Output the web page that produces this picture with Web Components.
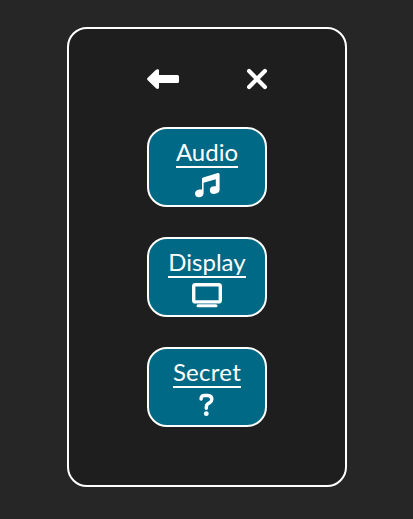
<!DOCTYPE html>
<html lang="en">
<head>
<meta charset="utf-8">
<title>Menu</title>
<style>
body{margin:0;background:#262626;color:#fff;font-family:Lato,sans-serif}
.wide{letter-spacing:.28px}
</style>
</head>
<body>
<menu-page>
  <menu-panel>
    <tool-row slot="tools"><menu-icon name="back"></menu-icon><menu-icon name="close"></menu-icon></tool-row>
    <menu-button icon="music">Audio</menu-button>
    <menu-button icon="screen">Display</menu-button>
    <menu-button icon="question" class="wide">Secret</menu-button>
  </menu-panel>
</menu-page>
<script>
const icons = {
  back: [32, 20, '<path fill="currentColor" d="M.5 8.9 9 .8Q10-.1 11.2.2 12 .6 12 1.8V6H30.5Q32 6 32 7.5V12.5Q32 14 30.5 14H12V18.2Q12 19.4 11.2 19.8 10 20.1 9 19.2L.5 11.1Q-.5 10 .5 8.9Z"/>'],
  close: [20, 20, '<path stroke="currentColor" stroke-width="4.2" stroke-linecap="round" d="M2.1 2.1 17.9 17.9M17.9 2.1 2.1 17.9"/>'],
  music: [25, 25, '<path fill="currentColor" d="M22.8.1 8.2 4.4Q7 4.8 7 6V16.6Q1 15.5 0 20 0 24.3 4 24.3 8.5 24 8.6 20V9.7L20.8 6.2V13.3Q15 12.5 14.8 17 15 21.1 18.8 21.1 24.4 20.5 24.6 17V1.6Q24.6-.2 22.8.1Z"/>'],
  screen: [30, 25, '<rect x="1.7" y="1.7" width="26.6" height="17.2" rx="1.7" stroke="currentColor" stroke-width="3.4"/><path stroke="currentColor" stroke-width="3" stroke-linecap="round" d="M6 22.7H24"/>'],
  question: [16, 24, '<path stroke="currentColor" stroke-width="3.5" stroke-linecap="round" stroke-linejoin="round" d="M2.1 6V5.5Q2.3 2.4 5.6 2.4H8.8Q12.8 2.6 12.8 6.1 12.8 8.3 10.8 9.6L8.9 10.8Q7.3 11.8 7.3 14.3V15.2"/><circle cx="7.3" cy="20.7" r="2.4" fill="currentColor"/>']
};
const component = (tag, render) => customElements.define(tag, class extends HTMLElement {
  constructor(){ super(); this.attachShadow({mode:'open'}); }
  connectedCallback(){ this.shadowRoot.innerHTML = render(this); }
});
component('menu-icon', el => {
  const [w, h, art] = icons[el.getAttribute('name')];
  return `<style>:host{display:block;width:${w}px;height:${h}px}svg{display:block;overflow:visible}</style>
  <svg width="${w}" height="${h}" viewBox="0 0 ${w} ${h}" fill="none">${art}</svg>`;
});
component('tool-row', () => `<style>:host{display:flex;justify-content:space-between;width:120px;height:20px}</style><slot></slot>`);
component('menu-button', el => `<style>
  :host{display:block}
  button{display:flex;flex-direction:column;align-items:center;box-sizing:border-box;width:120px;height:80px;margin:0;padding:8px 0 0;border:2px solid #fff;border-radius:20px;background:#006985;color:#fff;font:24px/29px Lato,sans-serif;letter-spacing:inherit}
  .label{height:29px;border-bottom:2px solid #fff}
  .art{display:grid;place-items:center;height:32px;margin-top:1px}
  </style><button><span class="label"><slot></slot></span><span class="art"><menu-icon name="${el.getAttribute('icon')}"></menu-icon></span></button>`);
component('menu-panel', () => `<style>
  :host{display:flex;flex-direction:column;align-items:center;box-sizing:border-box;width:280px;height:460px;padding-top:40px;border:2px solid #fff;border-radius:20px;background:#1e1e1e}
  .buttons{display:flex;flex-direction:column;gap:30px;margin-top:38px}
  </style><slot name="tools"></slot><div class="buttons"><slot></slot></div>`);
component('menu-page', () => `<style>:host{display:flex;justify-content:center;box-sizing:border-box;height:519px;padding:27px 0 0 1px}</style><slot></slot>`);
</script>
</body>
</html>
